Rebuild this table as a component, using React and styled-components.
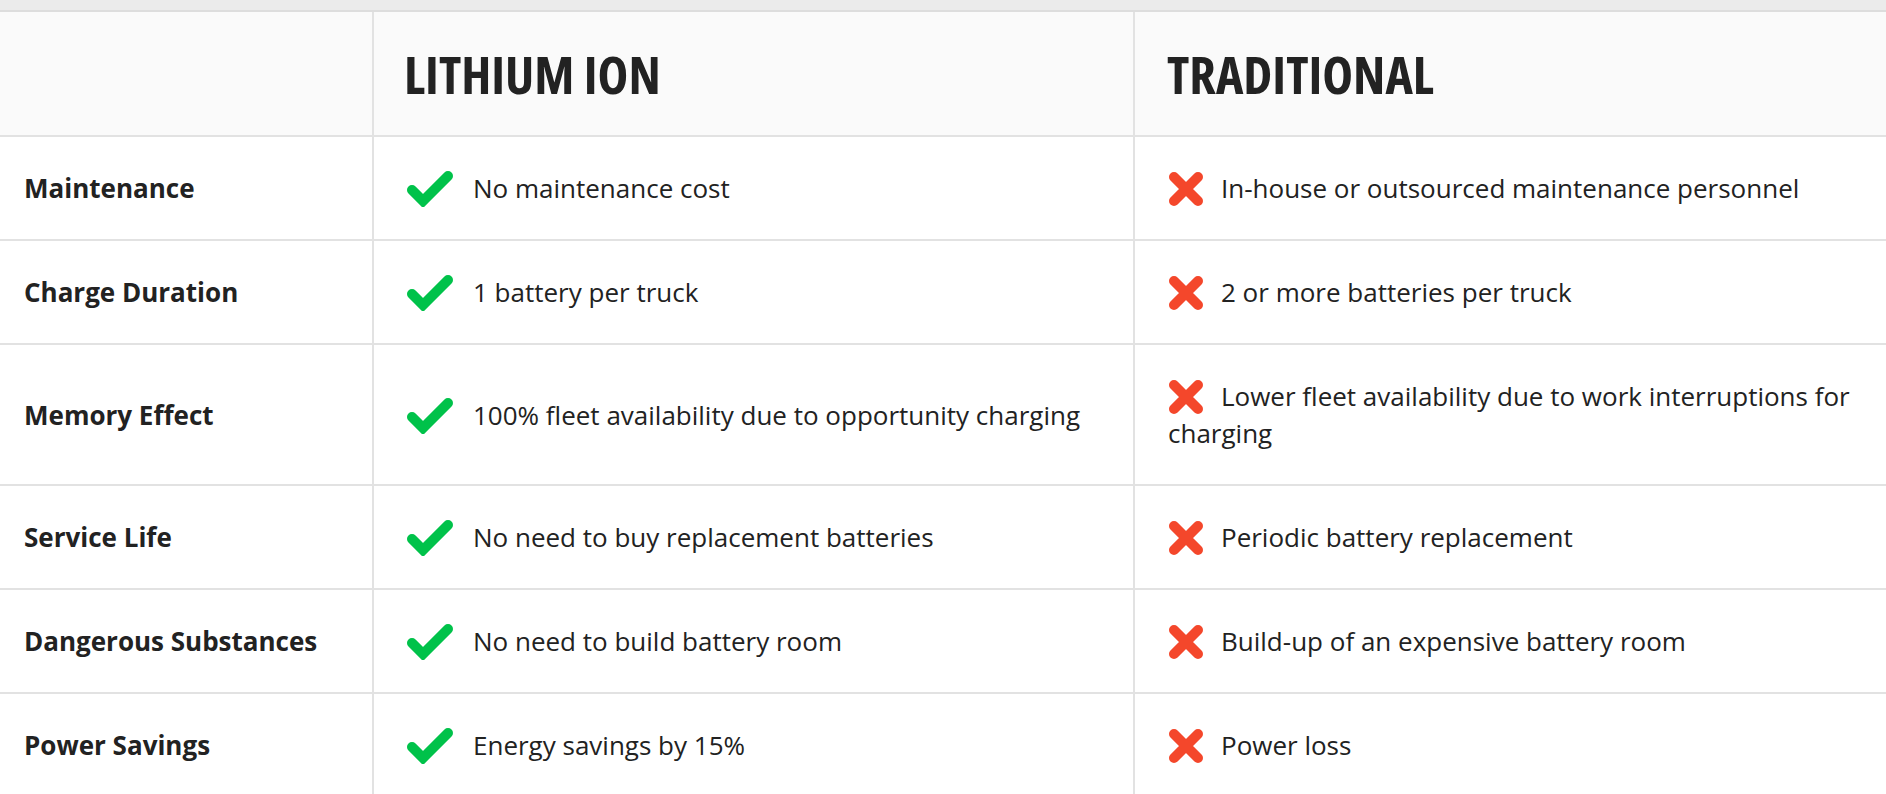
import styled, { createGlobalStyle } from "styled-components";

const GlobalStyle = createGlobalStyle`
  body {
    margin: 0;
    background: #fff;
    font-family: "Open Sans", "Liberation Sans", sans-serif;
    color: #222;
  }
`;

const TopBar = styled.div`
  height: 10px;
  background: #ebebeb;
  border-bottom: 2px solid #dddddd;
`;

const Table = styled.div`
  display: flex;
  flex-direction: column;
`;

const Row = styled.div`
  display: grid;
  grid-template-columns: 372px 761px 1fr;
  min-height: ${(p) => (p.head ? "125px" : "104px")};
  background: ${(p) => (p.head ? "#fafafa" : "#fff")};
  border-bottom: 2px solid #e2e2e2;
  box-sizing: border-box;
`;

const Cell = styled.div`
  display: flex;
  align-items: center;
  box-sizing: border-box;
  padding: ${(p) => p.pad || "33px 32px 32px"};
  border-left: ${(p) => (p.first ? "none" : "2px solid #e2e2e2")};
`;

const HeadTitle = styled.h2`
  margin: 0;
  font-family: "Open Sans", "Liberation Sans", sans-serif;
  font-stretch: 75%;
  font-weight: 700;
  font-size: 52px;
  color: #222;
`;

const Label = styled.div`
  font-weight: 700;
  font-size: 26px;
  line-height: 37px;
  color: #222;
`;

const Text = styled.div`
  font-weight: 400;
  font-size: 26px;
  line-height: 37px;
  color: #222;
`;

const IconWrap = styled.span`
  display: inline-block;
  vertical-align: middle;
  margin: -10px ${(p) => p.gap}px -6px 0;
  svg {
    display: block;
  }
`;

const Check = () => (
  <IconWrap gap={19}>
    <svg width="48" height="36" viewBox="0 0 48 36">
      <path
        d="M6 19 L17 30 L42 5"
        fill="none"
        stroke="#00c24a"
        strokeWidth="10"
        strokeLinecap="round"
        strokeLinejoin="miter"
      />
    </svg>
  </IconWrap>
);

const Cross = () => (
  <IconWrap gap={17}>
    <svg width="36" height="36" viewBox="0 0 36 36">
      <path
        d="M6 6 L30 30 M30 6 L6 30"
        fill="none"
        stroke="#f4472b"
        strokeWidth="10"
        strokeLinecap="round"
      />
    </svg>
  </IconWrap>
);

const rows = [
  ["Maintenance", "No maintenance cost", "In-house or outsourced maintenance personnel"],
  ["Charge Duration", "1 battery per truck", "2 or more batteries per truck"],
  [
    "Memory Effect",
    "100% fleet availability due to opportunity charging",
    "Lower fleet availability due to work interruptions for charging",
  ],
  ["Service Life", "No need to buy replacement batteries", "Periodic battery replacement"],
  ["Dangerous Substances", "No need to build battery room", "Build-up of an expensive battery room"],
  ["Power Savings", "Energy savings by 15%", "Power loss"],
];

export default function App() {
  return (
    <>
      <GlobalStyle />
      <TopBar />
      <Table>
        <Row head>
          <Cell first />
          <Cell pad="0 30px">
            <HeadTitle>LITHIUM ION</HeadTitle>
          </Cell>
          <Cell pad="0 32px">
            <HeadTitle>TRADITIONAL</HeadTitle>
          </Cell>
        </Row>
        {rows.map(([label, good, bad]) => (
          <Row key={label}>
            <Cell first pad="33px 24px 32px">
              <Label>{label}</Label>
            </Cell>
            <Cell>
              <Text>
                <Check />
                {good}
              </Text>
            </Cell>
            <Cell pad="33px 33px 32px">
              <Text>
                <Cross />
                {bad}
              </Text>
            </Cell>
          </Row>
        ))}
      </Table>
    </>
  );
}
